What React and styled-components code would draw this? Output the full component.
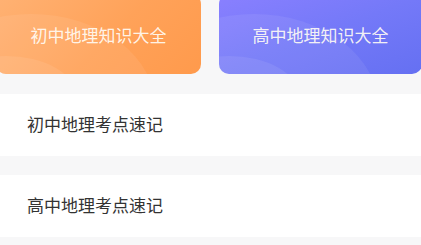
import React from "react";
import styled, { createGlobalStyle } from "styled-components";

const Global = createGlobalStyle`
  html, body { margin: 0; padding: 0; background: #f7f7f8; }
  body { font-family: "Noto Sans CJK SC", "Noto Sans", sans-serif; overflow: hidden; }
`;

const Page = styled.div`
  width: 421px;
  height: 245px;
  background: #f7f7f8;
  overflow: hidden;
`;

const CardRow = styled.div`
  display: grid;
  grid-template-columns: 205px 203px;
  column-gap: 18px;
  margin-left: -4px;
  margin-top: -6px;
`;

const Card = styled.div`
  position: relative;
  overflow: hidden;
  height: 80px;
  border-radius: 10px;
  background: ${(p) => p.$bg};
  display: flex;
  align-items: center;
  justify-content: center;
  padding-top: 1px;
  box-sizing: border-box;
  color: rgba(255, 252, 245, 0.93);
  font-size: 17px;

  &::before {
    content: "";
    position: absolute;
    left: -90px;
    top: 20px;
    width: 250px;
    height: 190px;
    border-radius: 50%;
    background: rgba(255, 255, 255, 0.07);
  }
  &::after {
    content: "";
    position: absolute;
    left: -60px;
    top: 62px;
    width: 140px;
    height: 80px;
    border-radius: 50%;
    background: rgba(255, 255, 255, 0.08);
  }
`;

const CardLabel = styled.span`
  position: relative;
  z-index: 1;
`;

const List = styled.div`
  display: flex;
  flex-direction: column;
  gap: 19px;
  margin-top: 20px;
`;

const Row = styled.div`
  height: 62px;
  background: #ffffff;
  display: flex;
  align-items: center;
  padding-left: 27px;
  padding-bottom: 4px;
  box-sizing: border-box;
  font-size: 17px;
  color: #333333;
`;

const cards = [
  { label: "初中地理知识大全", bg: "linear-gradient(135deg, #ffb274 0%, #ffa259 55%, #ff9a4c 100%)" },
  { label: "高中地理知识大全", bg: "linear-gradient(160deg, #8a80ff 0%, #7479f8 50%, #6570f2 100%)" },
];

const rows = ["初中地理考点速记", "高中地理考点速记"];

export default function App() {
  return (
    <Page>
      <Global />
      <CardRow>
        {cards.map((c) => (
          <Card key={c.label} $bg={c.bg}>
            <CardLabel>{c.label}</CardLabel>
          </Card>
        ))}
      </CardRow>
      <List>
        {rows.map((r) => (
          <Row key={r}>{r}</Row>
        ))}
      </List>
    </Page>
  );
}
